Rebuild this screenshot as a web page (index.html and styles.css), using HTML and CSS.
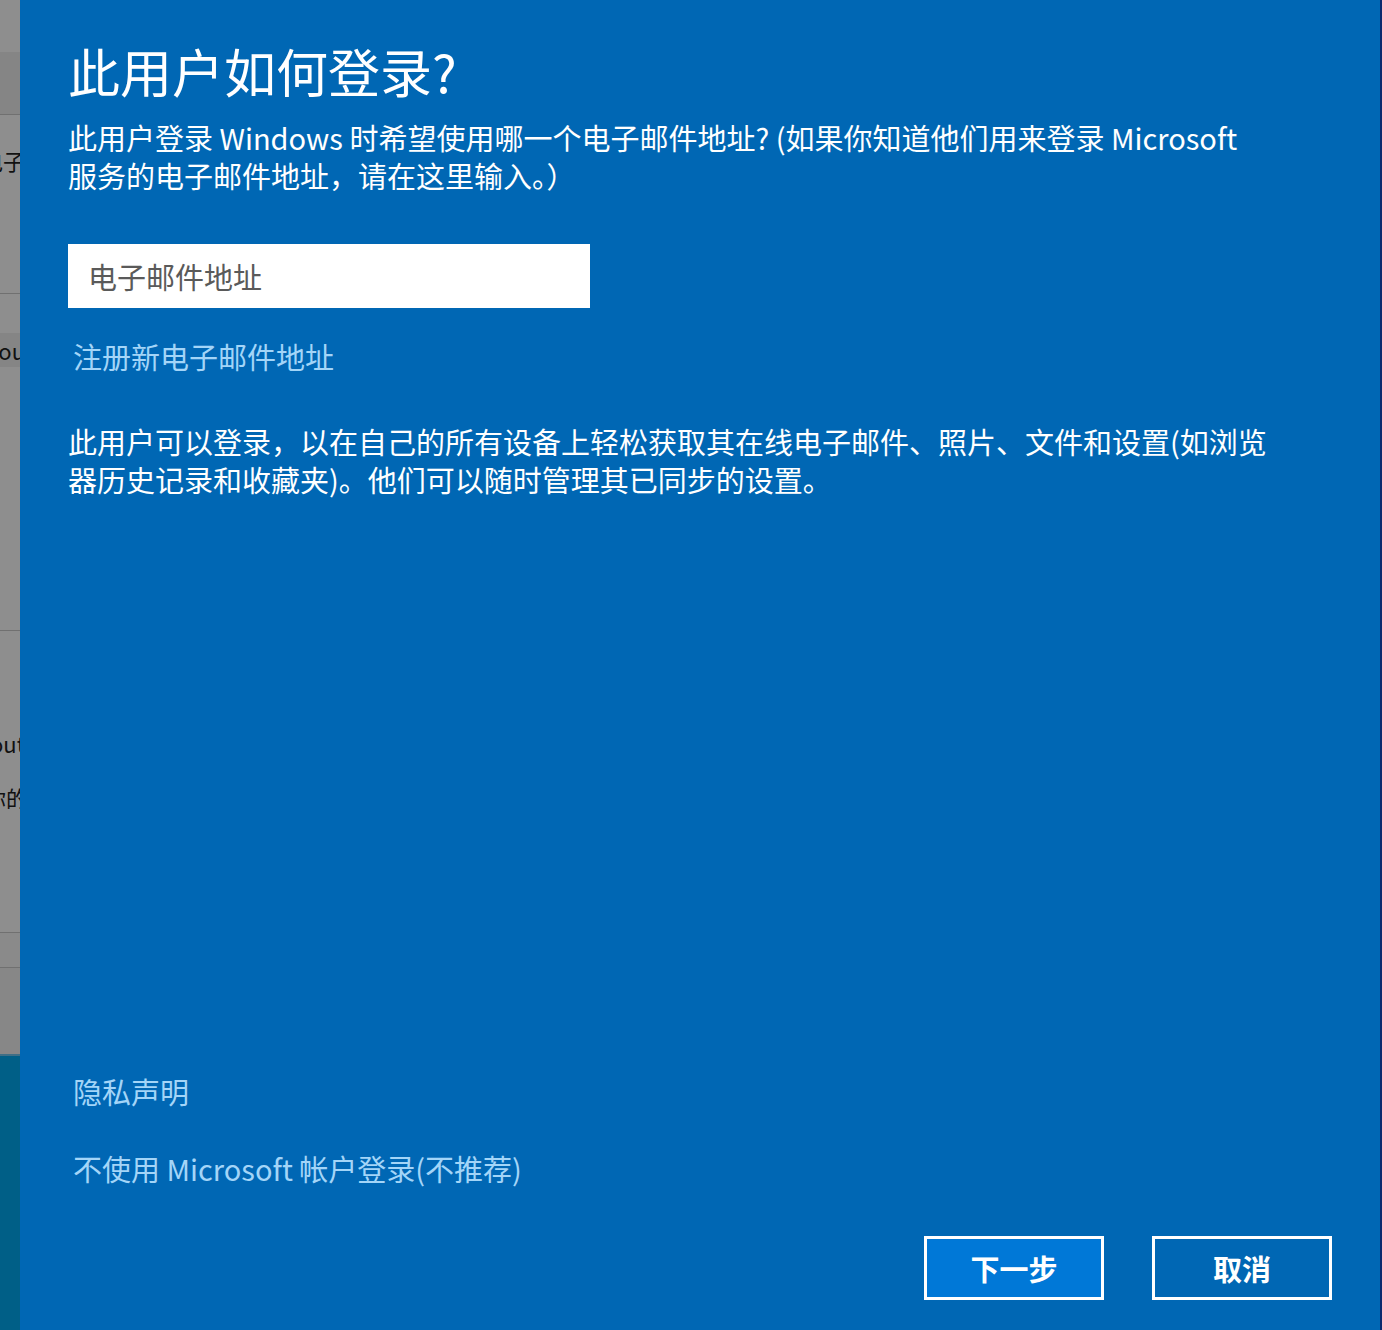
FILE: index.html
```html
<!DOCTYPE html>
<html lang="zh-CN">
<head>
    <meta charset="UTF-8">
    <meta name="viewport" content="width=device-width, initial-scale=1.0">
    <title>此用户如何登录?</title>
    <link rel="stylesheet" href="styles.css">
</head>
<body>
    <div class="screen">
        <aside class="backdrop">
            <div class="strip strip-top"></div>
            <div class="strip strip-head dark"></div>
            <div class="strip strip-a"><span class="peek">电子</span></div>
            <div class="strip strip-b"></div>
            <div class="strip strip-c dark"><span class="peek">You</span></div>
            <div class="strip strip-d"></div>
            <div class="strip strip-e">
                <span class="peek">About</span>
                <span class="peek peek-cjk">你的</span>
            </div>
            <div class="strip strip-f"></div>
            <div class="strip strip-g"></div>
            <div class="strip desktop"></div>
        </aside>

        <section class="dialog">
            <div class="dialog-body">
                <h1>此用户如何登录?</h1>
                <p class="lead">此用户登录 Windows 时希望使用哪一个电子邮件地址? (如果你知道他们用来登录 Microsoft<br>服务的电子邮件地址，请在这里输入。）</p>
                <input class="email" type="email" placeholder="电子邮件地址">
                <a class="link link-signup" href="#">注册新电子邮件地址</a>
                <p class="info">此用户可以登录，以在自己的所有设备上轻松获取其在线电子邮件、照片、文件和设置(如浏览<br>器历史记录和收藏夹)。他们可以随时管理其已同步的设置。</p>
            </div>

            <div class="dialog-footer">
                <a class="link" href="#">隐私声明</a>
                <a class="link link-local" href="#">不使用 Microsoft 帐户登录(不推荐)</a>
                <div class="actions">
                    <button class="btn btn-primary" type="button">下一步</button>
                    <button class="btn" type="button">取消</button>
                </div>
            </div>
        </section>
    </div>
</body>
</html>
```

FILE: styles.css
```css
* {
    margin: 0;
    padding: 0;
    box-sizing: border-box;
}
:root {
    --dialog-blue: #0067b4;
    --button-blue: #0078d7;
    --link-color: #a3d5f8;
    --grey: #8e8e8e;
    --grey-dark: #858585;
    --grey-line: #707070;
}
body {
    font-family: "Noto Sans CJK SC", "Noto Sans", sans-serif;
    background-color: var(--dialog-blue);
    color: white;
    width: 1382px;
    height: 1330px;
    overflow: hidden;
}
.screen {
    display: flex;
    height: 1330px;
}

/* window behind the dialog */
.backdrop {
    width: 20px;
    flex: none;
    display: flex;
    flex-direction: column;
    overflow: hidden;
    background-color: var(--grey);
    color: #111;
    font-size: 22px;
    line-height: 28px;
}
.strip {
    display: flex;
    flex-direction: column;
    align-items: flex-end;
    flex: none;
}
.strip.dark {
    background-color: var(--grey-dark);
}
.strip-top { height: 52px; }
.strip-head { height: 63px; border-bottom: 1px solid var(--grey-line); }
.strip-a { height: 179px; padding-top: 31px; border-bottom: 1px solid var(--grey-line); }
.strip-b { height: 39px; }
.strip-c { height: 34px; padding-top: 3px; }
.strip-d { height: 264px; border-bottom: 1px solid var(--grey-line); }
.strip-e { height: 302px; padding-top: 98px; gap: 26px; border-bottom: 1px solid var(--grey-line); }
.strip-f { height: 35px; border-bottom: 1px solid var(--grey-line); background-color: #8a8a8a; }
.strip-g { height: 86px; background-color: #878787; }
.desktop {
    flex: 1;
    background-color: #005f87;
    border-top: 2px solid #3f6f86;
}
.peek {
    white-space: nowrap;
    margin-right: -5px;
}
.peek-cjk {
    margin-right: -8px;
}

/* dialog */
.dialog {
    flex: 1;
    display: flex;
    flex-direction: column;
    justify-content: space-between;
    padding: 40px 48px 30px 48px;
    border-right: 2px solid #0a2a6e;
    font-size: 29px;
    line-height: 38px;
}
.dialog-body {
    display: flex;
    flex-direction: column;
    align-items: flex-start;
}
h1 {
    font-size: 52px;
    line-height: 62px;
    font-weight: 400;
    margin-bottom: 16px;
}
.lead {
    margin-bottom: 50px;
}
.email {
    width: 522px;
    height: 64px;
    border: none;
    outline: none;
    padding: 0 20px;
    background-color: white;
    color: #333;
    font-family: inherit;
    font-size: 29px;
    margin-bottom: 29px;
}
.email::placeholder {
    color: #5a5a5a;
}
.link {
    color: var(--link-color);
    text-decoration: none;
    margin-left: 5px;
}
.link-signup {
    margin-bottom: 47px;
}
.dialog-footer {
    display: flex;
    flex-direction: column;
    align-items: flex-start;
}
.link-local {
    margin-top: 39px;
}
.actions {
    align-self: stretch;
    display: flex;
    justify-content: flex-end;
    gap: 48px;
    margin-top: 49px;
}
.btn {
    width: 180px;
    height: 64px;
    border: 3px solid white;
    background-color: var(--dialog-blue);
    color: white;
    font-family: inherit;
    font-size: 29px;
    font-weight: 700;
    cursor: pointer;
}
.btn-primary {
    background-color: var(--button-blue);
}
```
